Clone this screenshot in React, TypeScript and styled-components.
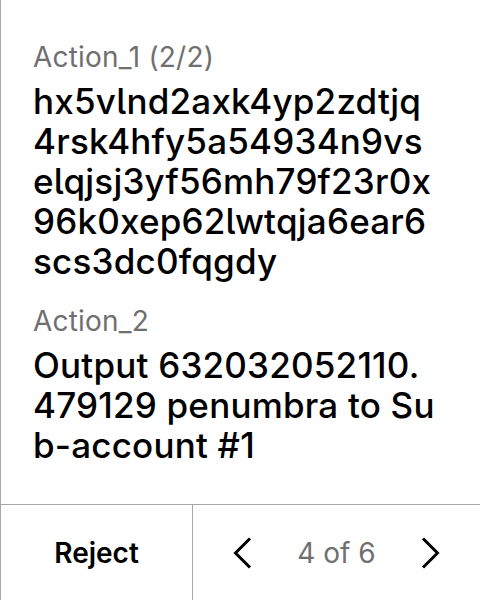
import React from "react";
import styled, { createGlobalStyle } from "styled-components";

const Global = createGlobalStyle`
  html, body { margin: 0; padding: 0; background: #fff; }
  body { font-family: Inter, "Noto Sans", sans-serif; -webkit-font-smoothing: antialiased; }
  * { box-sizing: border-box; }
`;

const Screen = styled.div`
  width: 480px;
  height: 600px;
  display: flex;
  flex-direction: column;
  border-left: 1px solid #a6a6a6;
  background: #fff;
`;

const Content = styled.div`
  flex: 1;
  display: flex;
  flex-direction: column;
  justify-content: center;
  gap: 24px;
  padding: 2px 32px 0 32px;
`;

const Pair = styled.div`
  display: flex;
  flex-direction: column;
  gap: 8px;
`;

const Tag = styled.div`
  font-size: 28px;
  line-height: 32px;
  font-weight: 400;
  letter-spacing: 0.2px;
  color: #6f6f6f;
`;

const Value = styled.div`
  font-size: 35px;
  line-height: 40px;
  font-weight: 500;
  letter-spacing: 0.2px;
  color: #000;
  font-feature-settings: "cv05";
`;

const Line = styled.span`
  display: block;
  white-space: nowrap;
`;

const Footer = styled.div`
  height: 96px;
  flex: none;
  display: grid;
  grid-template-columns: 192px 1fr;
  border-top: 1px solid #a6a6a6;
`;

const RejectButton = styled.button`
  border: none;
  background: none;
  border-right: 1px solid #a6a6a6;
  font-family: inherit;
  font-size: 28px;
  font-weight: 600;
  color: #000;
  padding: 0;
`;

const Nav = styled.div`
  display: grid;
  grid-template-columns: 100px 1fr 100px;
  align-items: center;
`;

const NavButton = styled.button`
  border: none;
  background: none;
  padding: 0;
  height: 100%;
  display: flex;
  align-items: center;
  justify-content: center;
`;

const PageText = styled.span`
  text-align: center;
  font-size: 28px;
  color: #6f6f6f;
`;

const Chevron = ({ dir }: { dir: "left" | "right" }) => (
  <svg width="20" height="32" viewBox="0 0 20 32" fill="none">
    <path
      d={dir === "left" ? "M17 1.5 L2.5 16 L17 30.5" : "M3 1.5 L17.5 16 L3 30.5"}
      stroke="#000"
      strokeWidth="3"
    />
  </svg>
);

const items = [
  {
    tag: "Action_1 (2/2)",
    lines: [
      "hx5vlnd2axk4yp2zdtjq",
      "4rsk4hfy5a54934n9vs",
      "elqjsj3yf56mh79f23r0x",
      "96k0xep62lwtqja6ear6",
      "scs3dc0fqgdy",
    ],
  },
  {
    tag: "Action_2",
    lines: ["Output 632032052110.", "479129 penumbra to Su", "b-account #1"],
  },
];

export default function App() {
  return (
    <>
      <Global />
      <Screen>
        <Content>
          {items.map((it) => (
            <Pair key={it.tag}>
              <Tag>{it.tag}</Tag>
              <Value>
                {it.lines.map((l) => (
                  <Line key={l}>{l}</Line>
                ))}
              </Value>
            </Pair>
          ))}
        </Content>
        <Footer>
          <RejectButton>Reject</RejectButton>
          <Nav>
            <NavButton aria-label="Previous"><Chevron dir="left" /></NavButton>
            <PageText>4 of 6</PageText>
            <NavButton aria-label="Next"><Chevron dir="right" /></NavButton>
          </Nav>
        </Footer>
      </Screen>
    </>
  );
}
